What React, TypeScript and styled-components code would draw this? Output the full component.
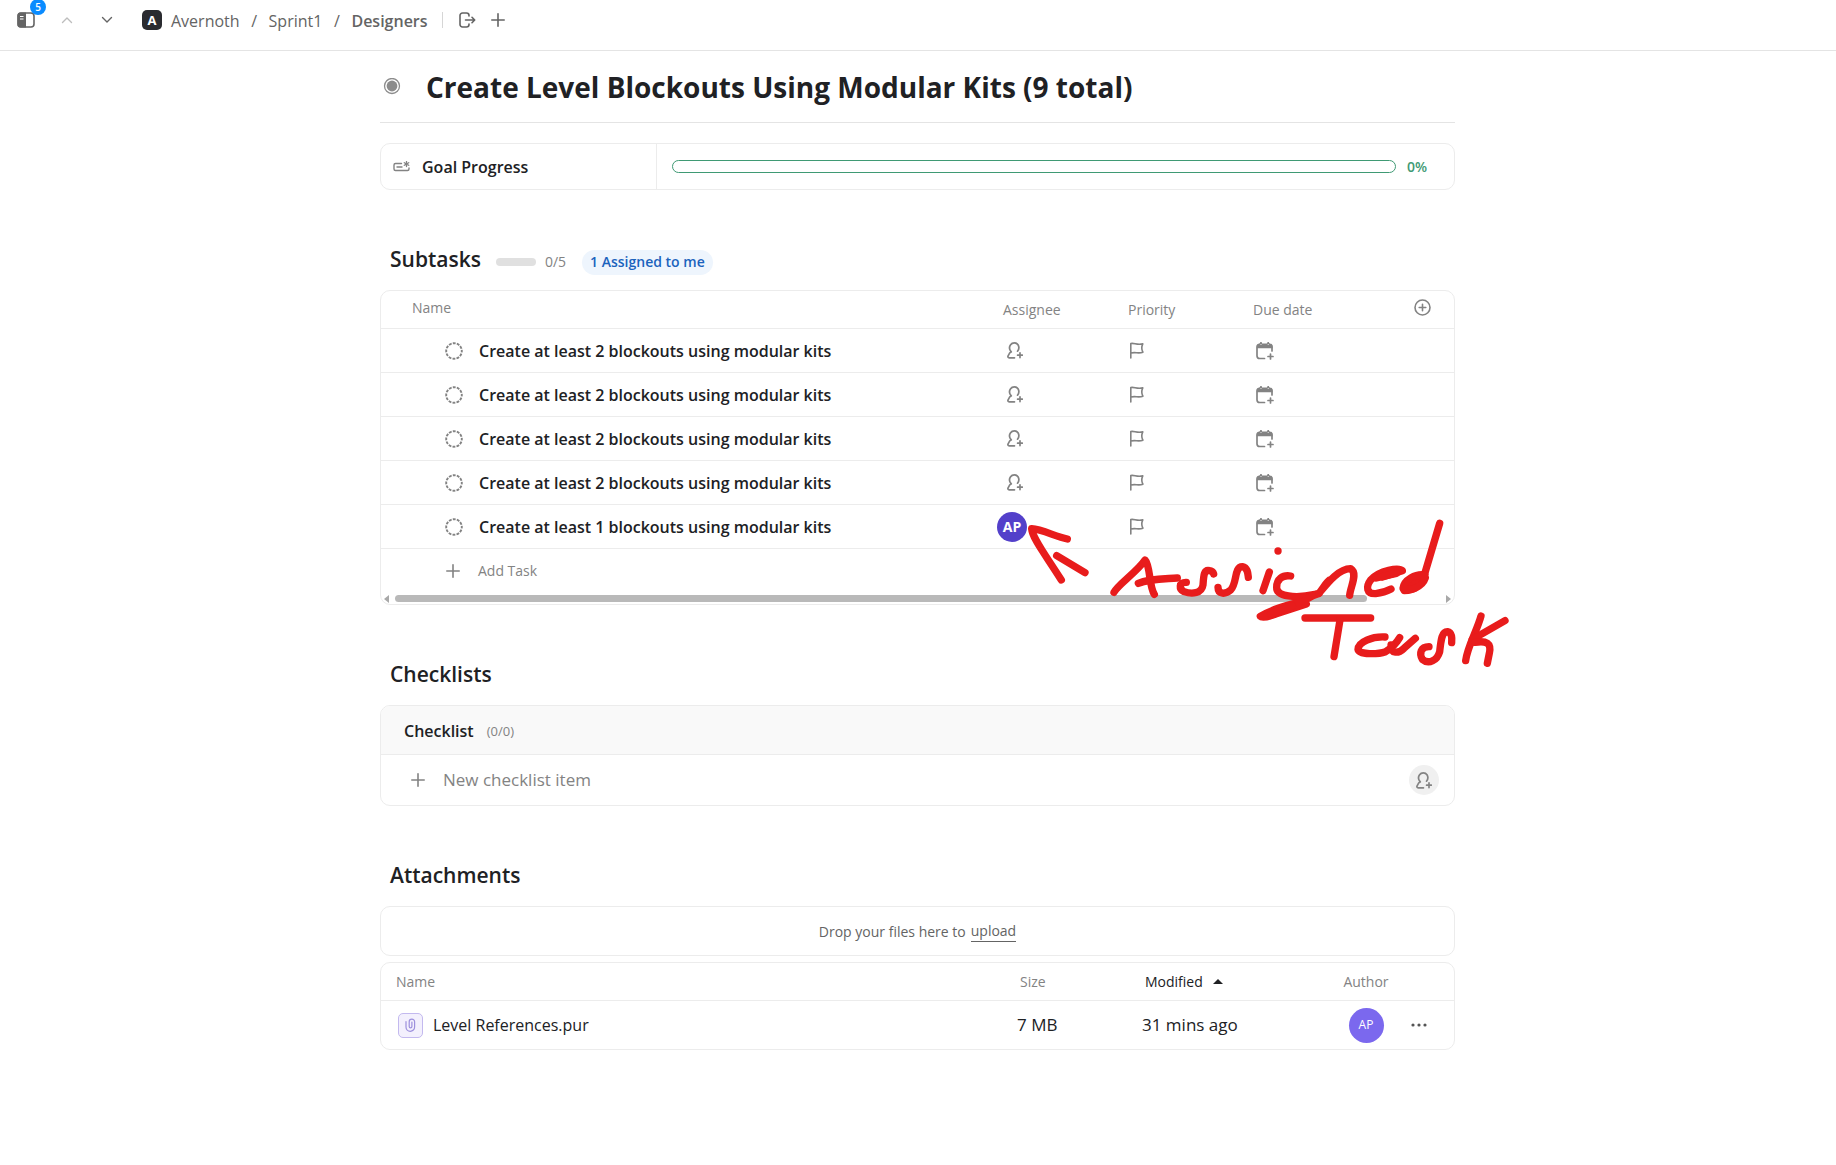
import React from "react";
import styled, { createGlobalStyle, css } from "styled-components";

const color = {
  text: "#202124",
  nav: "#646464",
  muted: "#838383",
  line: "#ececec",
  green: "#3f9a74",
  red: "#e81c1c",
};

const GlobalStyle = createGlobalStyle`
  * { box-sizing: border-box; }
  body {
    margin: 0;
    background: #fff;
    color: ${color.text};
    font-family: "Open Sans", "Noto Sans", sans-serif;
    font-size: 16px;
    line-height: 24px;
    overflow-x: hidden;
  }
  button, input { font: inherit; color: inherit; border: 0; background: none; padding: 0; margin: 0; }
  button { cursor: pointer; }
  svg { display: block; flex: none; }
`;

const TopBar = styled.header`
  display: flex;
  align-items: center;
  height: 51px;
  padding: 0 12px 11px;
  border-bottom: 1px solid #e4e4e4;
  color: ${color.nav};
`;

const NavButton = styled.button<{ $faded?: boolean; $width?: number }>`
  position: relative;
  display: flex;
  align-items: center;
  justify-content: center;
  width: ${(p) => p.$width ?? 40}px;
  height: 28px;
  color: ${(p) => (p.$faded ? "#bdbdbd" : color.nav)};
`;

const CountBadge = styled.span`
  position: absolute;
  left: 18px;
  top: -7px;
  width: 16px;
  height: 16px;
  border-radius: 8px;
  background: #0a8cff;
  color: #fff;
  font-size: 10px;
  font-weight: 600;
  line-height: 16px;
  text-align: center;
`;

const Crumbs = styled.nav`
  display: flex;
  align-items: center;
  gap: 9px;
  margin-left: 22px;
`;

const SpaceBadge = styled.span`
  width: 20px;
  height: 20px;
  border-radius: 5px;
  background: #2a2b30;
  color: #fff;
  font-size: 13px;
  font-weight: 700;
  line-height: 20px;
  text-align: center;
`;

const Crumb = styled.a<{ $current?: boolean }>`
  padding-top: 2px;
  color: ${color.nav};
  text-decoration: none;
  font-weight: ${(p) => (p.$current ? 600 : 400)};
`;

const Slash = styled.span`
  width: 11px;
  padding-top: 2px;
  text-align: center;
`;

const NavDivider = styled.span`
  width: 1px;
  height: 16px;
  margin: 0 10px 0 14px;
  background: #d6d6d6;
`;

const Page = styled.main`
  width: 100%;
  max-width: 1076px;
  margin: 0 auto;
  padding-right: 1px;
`;

const TitleRow = styled.div`
  display: flex;
  align-items: center;
  height: 72px;
  padding: 0 3px;
  gap: 25px;
  border-bottom: 1px solid #e4e4e4;
`;

const Title = styled.h1`
  margin: 0;
  font-size: 28px;
  line-height: 40px;
  font-weight: 700;
`;

const Card = styled.div`
  position: relative;
  border: 1px solid ${color.line};
  border-radius: 10px;
`;

const GoalCard = styled(Card)`
  display: flex;
  height: 47px;
  margin-top: 20px;
`;

const GoalLabel = styled.div`
  display: flex;
  align-items: center;
  gap: 12px;
  width: 276px;
  padding-left: 12px;
  border-right: 1px solid ${color.line};
  font-weight: 600;

  svg { color: ${color.muted}; }
`;

const GoalValue = styled.div`
  flex: 1;
  display: flex;
  align-items: center;
  gap: 11px;
  padding: 0 27px 0 15px;
  color: ${color.green};
  font-size: 14px;
  font-weight: 600;
`;

const GoalBar = styled.div`
  flex: 1;
  height: 13px;
  border: 1px solid ${color.green};
  border-radius: 7px;
`;

const Section = styled.section`
  margin-top: 55px;
`;

const SectionHead = styled.div`
  display: flex;
  align-items: center;
  height: 32px;
  margin-bottom: 13px;
  padding: 2px 0 0 10px;
`;

const SectionTitle = styled.h2`
  margin: 0;
  padding-bottom: 6px;
  font-size: 21px;
  line-height: 30px;
  font-weight: 600;
`;

const MiniBar = styled.span`
  width: 40px;
  height: 8px;
  margin: 0 9px 0 15px;
  border-radius: 4px;
  background: #e0e0e0;
`;

const Count = styled.span`
  font-size: 14px;
  color: ${color.muted};
`;

const MineButton = styled.button`
  height: 25px;
  margin-left: 16px;
  padding: 0 8px;
  border-radius: 13px;
  background: #eef5fd;
  color: #1b63bd;
  font-size: 14px;
  font-weight: 600;
`;

const Table = styled.table`
  width: 100%;
  table-layout: fixed;
  border-collapse: separate;
  border-spacing: 0;
`;

const Col = styled.col<{ $width?: number }>`
  ${(p) => p.$width && css`width: ${p.$width}px;`}
`;

const Th = styled.th<{ $pad?: number; $lift?: boolean; $center?: boolean; $active?: boolean }>`
  height: 38px;
  padding: 0 0 ${(p) => (p.$lift ? 4 : 0)}px ${(p) => p.$pad ?? 6}px;
  border-bottom: 1px solid ${color.line};
  text-align: ${(p) => (p.$center ? "center" : "left")};
  font-size: 14px;
  line-height: 20px;
  font-weight: 400;
  color: ${(p) => (p.$active ? color.text : color.muted)};
`;

const Td = styled.td<{ $last?: boolean; $pad?: number; $meta?: boolean }>`
  height: ${(p) => (p.$last ? 48 : 44)}px;
  padding: 0 0 0 ${(p) => p.$pad ?? 0}px;
  border-bottom: ${(p) => (p.$last ? "0" : `1px solid ${color.line}`)};
  font-size: ${(p) => (p.$meta ? 17 : 16)}px;
`;

const TaskName = styled.div`
  display: flex;
  align-items: center;
  gap: 16px;
  padding-left: 64px;
  font-weight: 600;

  svg { color: ${color.muted}; }
`;

const CellButton = styled.button<{ $width?: number }>`
  display: flex;
  align-items: center;
  justify-content: center;
  width: ${(p) => p.$width ?? 36}px;
  height: 30px;
  color: ${color.muted};
`;

const Avatar = styled.span<{ $size: number; $tone: string; $bold?: boolean }>`
  display: flex;
  align-items: center;
  justify-content: center;
  width: ${(p) => p.$size}px;
  height: ${(p) => p.$size}px;
  border-radius: 50%;
  background: ${(p) => p.$tone};
  color: #fff;
  font-size: ${(p) => (p.$bold ? 14 : 12)}px;
  font-weight: ${(p) => (p.$bold ? 700 : 400)};
`;

const AddTask = styled.button`
  display: flex;
  align-items: center;
  gap: 18px;
  height: 44px;
  padding-left: 65px;
  color: ${color.muted};
  font-size: 14px;
`;

const ScrollTrack = styled.div`
  display: flex;
  align-items: center;
  gap: 6px;
  height: 11px;
  padding: 0 3px;
  color: #a8a8a8;
`;

const ScrollRail = styled.div`
  flex: 1;
`;

const ScrollThumb = styled.div`
  width: 93%;
  height: 7px;
  border-radius: 4px;
  background: #b9b9b9;
`;

const Drawing = styled.svg`
  position: absolute;
  right: -65px;
  top: 219px;
  pointer-events: none;
`;

const ChecklistHead = styled.div`
  display: flex;
  align-items: center;
  gap: 13px;
  height: 49px;
  padding: 2px 23px 0;
  border-bottom: 1px solid ${color.line};
  border-radius: 9px 9px 0 0;
  background: #f9f9f9;
`;

const ChecklistTitle = styled.h3`
  margin: 0;
  font-size: 16px;
  line-height: 24px;
  font-weight: 600;
`;

const ChecklistCount = styled.span`
  font-size: 13px;
  color: ${color.muted};
`;

const NewItem = styled.label`
  display: flex;
  align-items: center;
  gap: 18px;
  height: 50px;
  padding: 0 15px 0 30px;
  color: ${color.muted};
`;

const NewItemInput = styled.input`
  flex: 1;
  min-width: 0;
  outline: 0;
  font-size: 17px;

  &::placeholder { color: ${color.muted}; opacity: 1; }
`;

const RoundButton = styled.button`
  display: flex;
  align-items: center;
  justify-content: center;
  width: 30px;
  height: 30px;
  border-radius: 50%;
  background: #f0f0f0;
`;

const DropZone = styled(Card)`
  display: flex;
  align-items: center;
  justify-content: center;
  gap: 5px;
  height: 50px;
  margin-bottom: 6px;
  padding-top: 1px;
  color: ${color.nav};
  font-size: 14px;
  line-height: 20px;
`;

const UploadLink = styled.a`
  color: inherit;
  text-decoration: none;
  border-bottom: 1px solid ${color.nav};
`;

const SortLabel = styled.span`
  display: flex;
  align-items: center;
  gap: 10px;
`;

const FileName = styled.a`
  display: flex;
  align-items: center;
  gap: 10px;
  color: inherit;
  text-decoration: none;
`;

const FileIcon = styled.span`
  display: flex;
  align-items: center;
  justify-content: center;
  width: 25px;
  height: 25px;
  border: 1px solid #c3b9ef;
  border-radius: 5px;
  background: #f3f0fd;
  color: #9d90dd;
`;

const Centered = styled.div`
  display: flex;
  justify-content: center;
`;

const stroke = {
  fill: "none",
  stroke: "currentColor",
  strokeLinecap: "round" as const,
  strokeLinejoin: "round" as const,
};

const SidebarIcon = () => (
  <svg width="18" height="16" viewBox="0 0 18 16">
    <rect x="1" y="1" width="16" height="14" rx="3" {...stroke} strokeWidth="1.6" />
    <path d="M3.5 .5H9V15.500H3.5A3 3 0 0 1 .5 12.500V3.500A3 3 0 0 1 3.500 .5Z" fill="currentColor" />
    <path d="M3 4.500H6.500M3 7H6.500" stroke="#fff" strokeWidth="1.1" />
  </svg>
);

const Chevron = ({ up }: { up?: boolean }) => (
  <svg width="12" height="8" viewBox="0 0 12 8">
    <path d={up ? "M1.500 6.500 6 2l4.500 4.500" : "M1.500 1.500 6 6l4.500-4.500"} {...stroke} strokeWidth="1.4" />
  </svg>
);

const ExportIcon = () => (
  <svg width="17" height="16" viewBox="0 0 17 16">
    <path d="M10 4V3.500A2.500 2.500 0 0 0 7.500 1H3.500A2.500 2.500 0 0 0 1 3.500v9A2.500 2.500 0 0 0 3.500 15h4A2.500 2.500 0 0 0 10 12.500V12M6.500 8h9M13 5.300 15.700 8 13 10.700" {...stroke} strokeWidth="1.6" />
  </svg>
);

const PlusIcon = ({ size = 14 }: { size?: number }) => (
  <svg width={size} height={size} viewBox="0 0 14 14">
    <path d="M7 .8v12.400M.8 7h12.400" {...stroke} strokeWidth="1.6" />
  </svg>
);

const StatusDot = () => (
  <svg width="18" height="18" viewBox="0 0 18 18">
    <circle cx="9" cy="8" r="7.500" fill="none" stroke="#8c8c8c" strokeWidth="1.3" />
    <circle cx="9" cy="8" r="5.400" fill="#8c8c8c" />
  </svg>
);

const GoalIcon = () => (
  <svg width="17" height="11" viewBox="0 0 17 11">
    <path d="M8.500 2.500H2.500A1.500 1.500 0 0 0 1 4v4a1.500 1.500 0 0 0 1.500 1.500h12A1.500 1.500 0 0 0 16 8V7M4 6h5" {...stroke} strokeWidth="1.400" />
    <path d="M13.500 .5v5M11.300 1.700l4.400 2.600M15.700 1.700l-4.400 2.600" {...stroke} strokeWidth="1.300" />
  </svg>
);

const DashedCircle = () => (
  <svg width="18" height="18" viewBox="0 0 18 18">
    <circle cx="9" cy="9" r="7.800" fill="none" stroke="currentColor" strokeWidth="1.900" strokeDasharray="2.900 1.184" strokeDashoffset="1.450" />
  </svg>
);

const PersonPlus = () => (
  <svg width="16" height="17" viewBox="0 0 16 17">
    <path d="M7.500 15.800H2.200C1 15.800 .6 14.800 1.100 13.800L2.600 11.200C3 10.500 3.600 10.300 4.300 9.900 2 7.500 2.200 4.800 3.600 2.800 5.300 .3 9.300 .3 11 2.800 12.300 4.900 12 7.300 10.500 9.200M13 10.800v4.800M10.600 13.200h4.800" {...stroke} strokeWidth="1.700" />
  </svg>
);

const FlagIcon = () => (
  <svg width="22" height="17" viewBox="0 0 22 17">
    <path d="M1.800 16V1.500C5.500 .7 7.500 3.300 13.800 1.900 12.400 4.700 12.300 7.200 13.900 10.200 9 12 6.500 9.600 2 11" {...stroke} strokeWidth="1.600" />
  </svg>
);

const CalendarPlus = () => (
  <svg width="18" height="18" viewBox="0 0 18 18">
    <path d="M8.500 16.500H3.800A2.800 2.800 0 0 1 1 13.700V5.200A2.800 2.800 0 0 1 3.800 2.400h9.400A2.800 2.800 0 0 1 16 5.200V9M14.500 12v5M12 14.500h5" {...stroke} strokeWidth="1.700" />
    <path d="M.8 6.300V5A2.800 2.800 0 0 1 3.200 2.100L4.300 .6 6.200 1.900H10.800L12.700 .6 13.800 2.100A2.800 2.800 0 0 1 16.600 5V6.300Z" fill="currentColor" />
    <path d="M5 .9v2M12.200 .9v2" {...stroke} strokeWidth="1.900" />
    <path d="M5 2.200v.8M12.200 2.200v.8" stroke="#fff" strokeWidth="1" />
  </svg>
);

const PlusCircle = () => (
  <svg width="17" height="17" viewBox="0 0 17 17">
    <path d="M8.500 5.200v6.600M5.200 8.500h6.600" {...stroke} strokeWidth="1.600" />
    <circle cx="8.500" cy="8.500" r="7.500" {...stroke} strokeWidth="1.600" />
  </svg>
);

const Triangle = ({ d, w, h }: { d: string; w: number; h: number }) => (
  <svg width={w} height={h} viewBox={`0 0 ${w} ${h}`}>
    <path d={d} fill="currentColor" />
  </svg>
);

const ClipIcon = () => (
  <svg width="11" height="14" viewBox="0 0 11 14">
    <path d="M1 3.500V9A4.300 4.300 0 0 0 9.600 9V3.800A2.700 2.700 0 0 0 4.200 3.800V8.600A1.300 1.300 0 0 0 6.900 8.600V4" {...stroke} strokeWidth="1.200" />
  </svg>
);

const DotsIcon = () => (
  <svg width="16" height="4" viewBox="0 0 16 4" fill="#555">
    <circle cx="2" cy="2" r="1.600" />
    <circle cx="8" cy="2" r="1.600" />
    <circle cx="14" cy="2" r="1.600" />
  </svg>
);

const penStrokes = [
  "M-65 117C-100 110-140 88-172 86C-170 115-130 165-83 240",
  "M-97 167L-12 218",
  "M75 277C85 255 145 215 168 180C184 195 180 260 196 283",
  "M148 250C180 236 220 237 265 234",
  "M292 247C268 246 270 268 285 275C310 284 338 280 342 255C344 225 345 208 362 212Q372 214 374 222",
  "M387 262C387 285 410 283 425 270C445 250 435 200 460 200C476 203 477 220 478 232",
  "M541 216L522 272",
  "M567 153h.1",
  "M605 228C580 224 563 238 563 262C562 290 620 296 678 283",
  "M690 280C660 288 655 298 640 306C600 312 540 332 514 349C520 356 540 350 560 342L652 312",
  "M610 318L545 342",
  "M722 240C712 246 702 266 690 280C715 250 750 205 785 206C808 220 784 260 782 286",
  "M880 231L940 212C930 202 872 210 845 240C830 260 832 282 860 281Q886 278 906 267",
  "M862 234L922 220",
  "M1052 70L1006 225C1000 255 975 272 946 272C938 262 965 248 1000 236",
  "M1008 225C980 220 945 240 942 265C960 276 1000 262 1009 234",
  "M648 354H845",
  "M753 360L735 470",
  "M888 411C850 409 808 425 807 448C810 466 870 462 890 455C915 440 925 425 932 413",
  "M906 435C904 464 930 460 945 445L979 415",
  "M1020 440C995 440 990 460 1000 478C1020 495 1045 480 1052 455C1056 420 1058 395 1075 395C1090 398 1089 415 1088 428",
  "M1176 348C1165 390 1135 440 1130 482",
  "M1248 362L1150 418",
  "M1158 427C1192 421 1208 430 1201 460L1195 490",
];

const HandNote = () => (
  <Drawing width="500" height="170" viewBox="-210 30 1500 510" role="img" aria-label="Hand-drawn arrow and note">
    <g fill="none" stroke={color.red} strokeWidth="22" strokeLinecap="round" strokeLinejoin="round">
      {penStrokes.map((d) => (
        <path key={d} d={d} />
      ))}
    </g>
  </Drawing>
);

const subtasks = [
  { id: 1, name: "Create at least 2 blockouts using modular kits" },
  { id: 2, name: "Create at least 2 blockouts using modular kits" },
  { id: 3, name: "Create at least 2 blockouts using modular kits" },
  { id: 4, name: "Create at least 2 blockouts using modular kits" },
  { id: 5, name: "Create at least 1 blockouts using modular kits", assignee: "AP" },
];

const Navigation = () => (
  <TopBar>
    <NavButton $width={28} aria-label="Toggle sidebar">
      <SidebarIcon />
      <CountBadge>5</CountBadge>
    </NavButton>
    <NavButton $width={54} $faded aria-label="Previous task"><Chevron up /></NavButton>
    <NavButton $width={26} aria-label="Next task"><Chevron /></NavButton>
    <Crumbs aria-label="Breadcrumb">
      <SpaceBadge>A</SpaceBadge>
      <Crumb href="#avernoth">Avernoth</Crumb>
      <Slash>/</Slash>
      <Crumb href="#sprint1">Sprint1</Crumb>
      <Slash>/</Slash>
      <Crumb href="#designers" $current>Designers</Crumb>
    </Crumbs>
    <NavDivider />
    <NavButton $width={30} aria-label="Move task"><ExportIcon /></NavButton>
    <NavButton $width={30} aria-label="Add to another list"><PlusIcon /></NavButton>
  </TopBar>
);

const Subtasks = () => (
  <Section>
    <SectionHead>
      <SectionTitle>Subtasks</SectionTitle>
      <MiniBar />
      <Count>0/5</Count>
      <MineButton>1 Assigned to me</MineButton>
    </SectionHead>
    <Card>
      <Table>
        <colgroup>
          <Col />
          <Col $width={125} />
          <Col $width={125} />
          <Col $width={125} />
          <Col $width={82} />
        </colgroup>
        <thead>
          <tr>
            <Th $pad={31} $lift>Name</Th>
            <Th>Assignee</Th>
            <Th>Priority</Th>
            <Th>Due date</Th>
            <Th $pad={32} $lift><CellButton aria-label="Add column"><PlusCircle /></CellButton></Th>
          </tr>
        </thead>
        <tbody>
          {subtasks.map((task) => (
            <tr key={task.id}>
              <Td><TaskName><DashedCircle />{task.name}</TaskName></Td>
              <Td>
                {task.assignee ? (
                  <Avatar $size={30} $tone="#5340ca" $bold>{task.assignee}</Avatar>
                ) : (
                  <CellButton aria-label="Assign"><PersonPlus /></CellButton>
                )}
              </Td>
              <Td><CellButton aria-label="Set priority"><FlagIcon /></CellButton></Td>
              <Td><CellButton aria-label="Set due date"><CalendarPlus /></CellButton></Td>
              <Td />
            </tr>
          ))}
        </tbody>
      </Table>
      <AddTask><PlusIcon />Add Task</AddTask>
      <ScrollTrack>
        <Triangle d="M5 0V8L0 4Z" w={5} h={8} />
        <ScrollRail><ScrollThumb /></ScrollRail>
        <Triangle d="M0 0V8L5 4Z" w={5} h={8} />
      </ScrollTrack>
      <HandNote />
    </Card>
  </Section>
);

const Checklists = () => (
  <Section>
    <SectionHead><SectionTitle>Checklists</SectionTitle></SectionHead>
    <Card>
      <ChecklistHead>
        <ChecklistTitle>Checklist</ChecklistTitle>
        <ChecklistCount>(0/0)</ChecklistCount>
      </ChecklistHead>
      <NewItem>
        <PlusIcon />
        <NewItemInput placeholder="New checklist item" aria-label="New checklist item" />
        <RoundButton aria-label="Assign checklist item"><PersonPlus /></RoundButton>
      </NewItem>
    </Card>
  </Section>
);

const Attachments = () => (
  <Section>
    <SectionHead><SectionTitle>Attachments</SectionTitle></SectionHead>
    <DropZone>
      <span>Drop your files here to</span>
      <UploadLink href="#upload">upload</UploadLink>
    </DropZone>
    <Card>
      <Table>
        <colgroup>
          <Col />
          <Col $width={125} />
          <Col $width={196} />
          <Col $width={66} />
          <Col $width={55} />
        </colgroup>
        <thead>
          <tr>
            <Th $pad={15}>Name</Th>
            <Th $pad={8}>Size</Th>
            <Th $pad={8} $active>
              <SortLabel>Modified<Triangle d="M0 5L5 0L10 5Z" w={10} h={5} /></SortLabel>
            </Th>
            <Th $pad={0} $center>Author</Th>
            <Th $pad={0} />
          </tr>
        </thead>
        <tbody>
          <tr>
            <Td $last $pad={17}>
              <FileName href="#level-references"><FileIcon><ClipIcon /></FileIcon>Level References.pur</FileName>
            </Td>
            <Td $last $meta $pad={5}>7 MB</Td>
            <Td $last $meta $pad={5}>31 mins ago</Td>
            <Td $last><Centered><Avatar $size={35} $tone="#7b68ee">AP</Avatar></Centered></Td>
            <Td $last><CellButton $width={40} aria-label="More options"><DotsIcon /></CellButton></Td>
          </tr>
        </tbody>
      </Table>
    </Card>
  </Section>
);

export default function App() {
  return (
    <>
      <GlobalStyle />
      <Navigation />
      <Page>
        <TitleRow>
          <StatusDot />
          <Title>Create Level Blockouts Using Modular Kits (9 total)</Title>
        </TitleRow>
        <GoalCard>
          <GoalLabel><GoalIcon />Goal Progress</GoalLabel>
          <GoalValue>
            <GoalBar role="progressbar" aria-label="Goal progress" aria-valuenow={0} aria-valuemin={0} aria-valuemax={100} />
            0%
          </GoalValue>
        </GoalCard>
        <Subtasks />
        <Checklists />
        <Attachments />
      </Page>
    </>
  );
}
